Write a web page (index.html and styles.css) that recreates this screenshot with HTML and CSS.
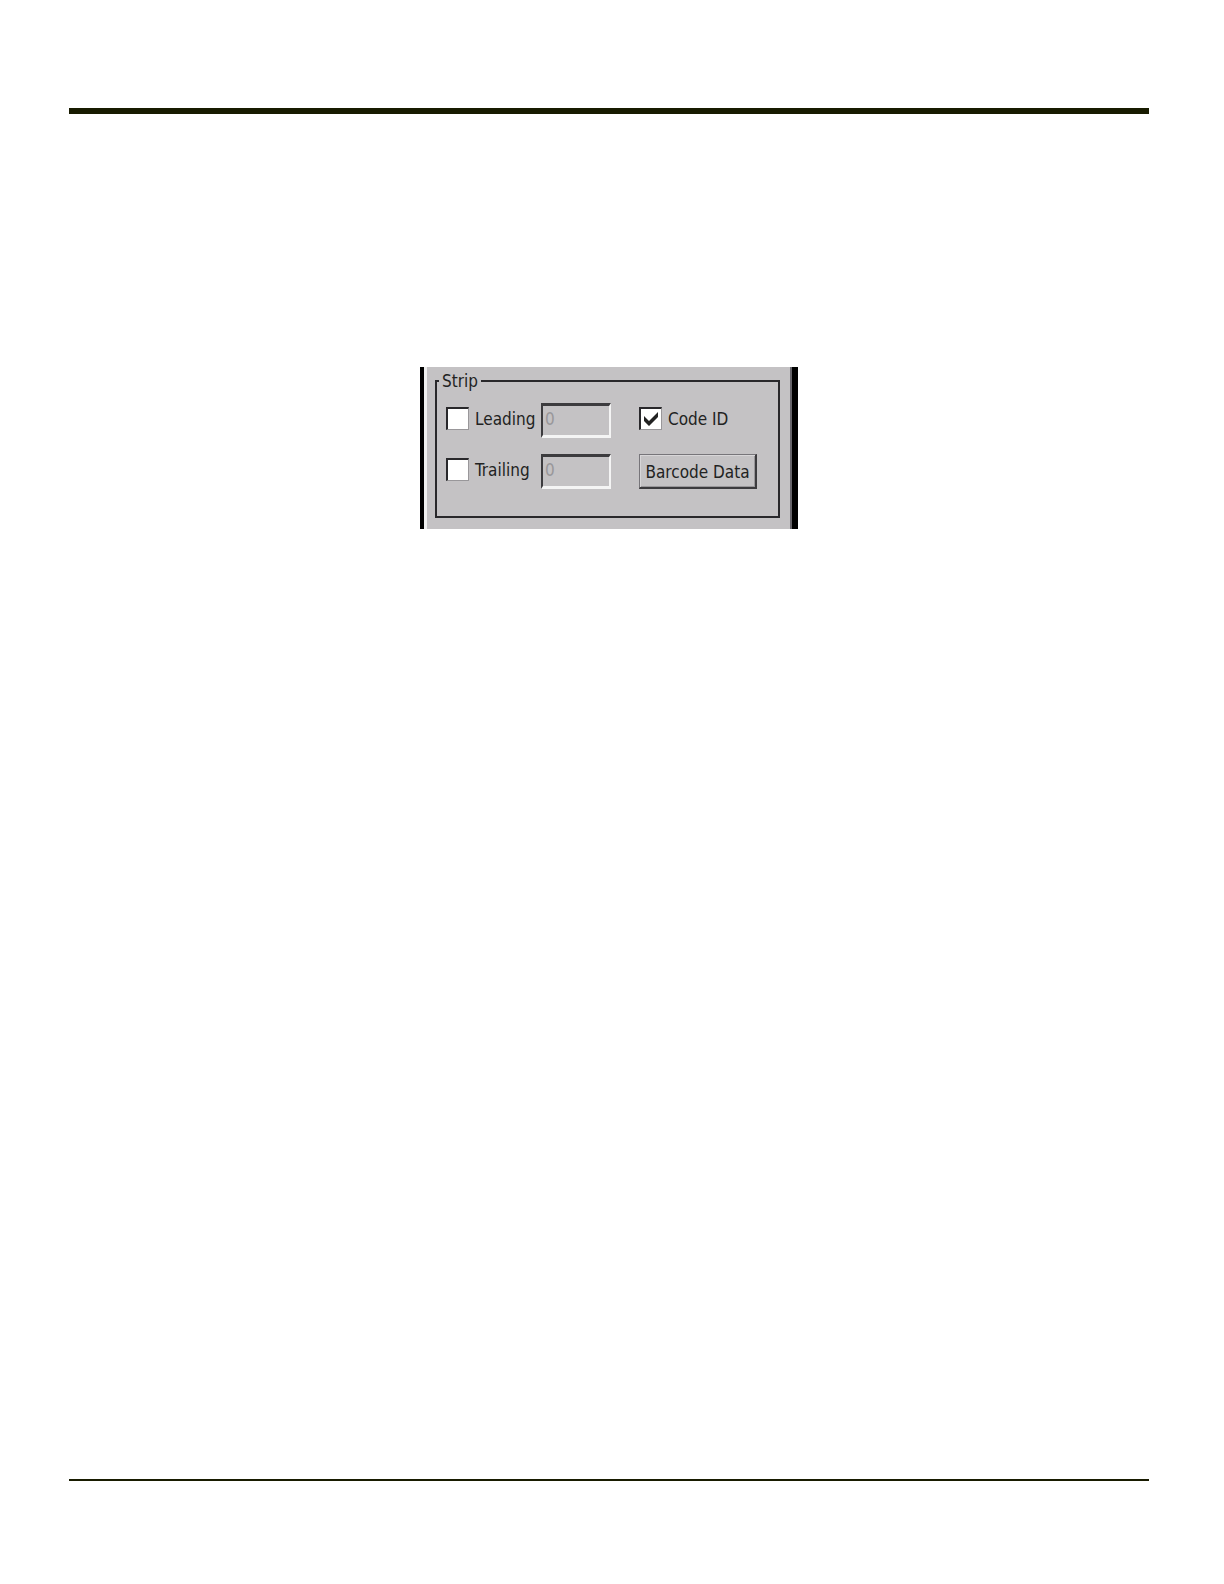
FILE: index.html
```html
<!DOCTYPE html>
<html lang="en">
<head>
<meta charset="utf-8">
<title>Strip</title>
<link rel="stylesheet" href="styles.css">
</head>
<body>
<div class="page">
  <main class="content">
    <form class="panel">
      <fieldset class="group">
        <legend class="group-title">Strip</legend>
        <div class="fields">
          <label class="option"><input class="check" type="checkbox">Leading</label>
          <input class="count" type="text" value="0" aria-label="Leading characters" disabled>
          <label class="option"><input class="check" type="checkbox" checked>Code ID</label>
          <label class="option"><input class="check" type="checkbox">Trailing</label>
          <input class="count" type="text" value="0" aria-label="Trailing characters" disabled>
          <button class="button" type="button">Barcode Data</button>
        </div>
      </fieldset>
    </form>
  </main>
</div>
</body>
</html>
```
FILE: styles.css
```css
* {
  box-sizing: border-box;
}

body {
  margin: 0;
  background: #fff;
  color: #222;
  font: 17px/20px "DejaVu Sans Condensed", "Noto Sans", sans-serif;
}

.page {
  display: flex;
  min-height: 100vh;
  padding: 108px 75px 103px 69px;
}

.content {
  flex: 1;
  padding-top: 253px;
  border-top: 6px solid #181b00;
  border-bottom: 2px solid #181b00;
}

.panel {
  width: 378px;
  max-width: 100%;
  margin: 0 auto;
  padding: 4px 12px 11px 11px;
  border: solid #000;
  border-width: 0 6px 0 4px;
  background: #c4c2c4;
  box-shadow: inset 3px 0 #f0f0f0, inset -2px 0 #66646a;
}

.group {
  min-width: 0;
  margin: 0;
  padding: 0;
  border: 2px solid #29282b;
}

.group-title {
  margin-left: 2px;
  padding: 0 3px;
}

.fields {
  display: grid;
  grid-template-columns: 95px 70px 147px;
  grid-auto-rows: 35px;
  row-gap: 16px;
  padding: 12px 9px 27px;
}

.option,
.button {
  white-space: nowrap;
}

.option {
  display: flex;
  align-items: center;
  align-self: start;
  gap: 6px;
  padding-top: 4px;
}

.count + .option,
.button {
  margin-left: 28px;
}

.check {
  appearance: none;
  flex: none;
  width: 23px;
  height: 23px;
  margin: 0;
  border: solid;
  border-width: 2px 1px 1px 2px;
  border-color: #29282b #99979a #99979a #29282b;
  background: #fff;
}

.check:checked {
  background: #fff url("data:image/svg+xml,%3Csvg xmlns='http://www.w3.org/2000/svg' viewBox='0 0 20 20'%3E%3Cpath d='M3 7v5l5 5 9-9V3L8 12z' fill='%23222'/%3E%3C/svg%3E") center / 20px 20px no-repeat;
}

.count {
  width: 70px;
  height: 35px;
  margin: 0;
  padding: 0 2px 3px;
  border: solid;
  border-width: 3px 2px 3px 2px;
  border-color: #3c3b3e #f4f4f4 #f4f4f4 #3c3b3e;
  border-radius: 0;
  background: #c4c2c4;
  color: #99979a;
  font: inherit;
}

.button {
  width: 118px;
  height: 35px;
  padding: 1px 0 0;
  border: solid;
  border-width: 1px 2px 2px 1px;
  border-color: #77757a #3c3b3e #3c3b3e #77757a;
  box-shadow: inset 1px 1px #d8d6d8, inset -1px -1px #99979a;
  background: #c4c2c4;
  color: inherit;
  font: inherit;
}
```
